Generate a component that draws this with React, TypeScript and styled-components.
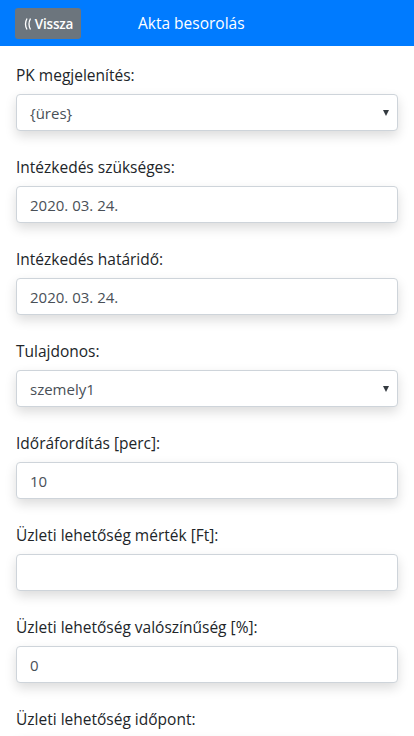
import React from "react";
import styled, { createGlobalStyle } from "styled-components";

const GlobalStyle = createGlobalStyle`
  body {
    margin: 0;
    background: #fff;
    font-family: "Open Sans", "Noto Sans", Arial, sans-serif;
    color: #212529;
  }
`;

interface Field {
  label: string;
  value: string;
  kind: "select" | "input";
}

const fields: Field[] = [
  { label: "PK megjelenítés:", value: "{üres}", kind: "select" },
  { label: "Intézkedés szükséges:", value: "2020. 03. 24.", kind: "input" },
  { label: "Intézkedés határidő:", value: "2020. 03. 24.", kind: "input" },
  { label: "Tulajdonos:", value: "szemely1", kind: "select" },
  { label: "Időráfordítás [perc]:", value: "10", kind: "input" },
  { label: "Üzleti lehetőség mérték [Ft]:", value: "", kind: "input" },
  { label: "Üzleti lehetőség valószínűség [%]:", value: "0", kind: "input" },
  { label: "Üzleti lehetőség időpont:", value: "", kind: "input" },
];

// thin double chevron in front of "Vissza"
const BackIcon = () => (
  <svg width="8" height="14" viewBox="0 0 8 14" fill="none">
    <path d="M4 1.5 Q1 7 4 12.5" stroke="#fff" strokeWidth="1.3" />
    <path d="M7.5 1.5 Q4.5 7 7.5 12.5" stroke="#fff" strokeWidth="1.3" />
  </svg>
);

function App() {
  return (
    <Page>
      <GlobalStyle />
      <TopBar>
        <BackButton>
          <BackIcon />
          Vissza
        </BackButton>
        <Title>Akta besorolás</Title>
      </TopBar>
      <Form>
        {fields.map((f) => (
          <Group key={f.label}>
            <Label>{f.label}</Label>
            <Box>
              <Value>{f.value}</Value>
              {f.kind === "select" && <Caret />}
            </Box>
          </Group>
        ))}
      </Form>
    </Page>
  );
}

const Page = styled.div`
  width: 414px;
  height: 736px;
  overflow: hidden;
`;

const TopBar = styled.div`
  height: 46px;
  background: #007bff;
  display: flex;
  align-items: center;
  padding: 0 15px;
  box-sizing: border-box;
`;

const BackButton = styled.div`
  height: 31px;
  width: 66px;
  box-sizing: border-box;
  background: #6c757d;
  border-radius: 3px;
  color: #fff;
  font-size: 13.5px;
  font-weight: 600;
  display: flex;
  align-items: center;
  justify-content: center;
  gap: 4px;
  letter-spacing: -0.2px;
  margin-top: 1px;
`;

const Title = styled.div`
  color: #fff;
  font-size: 15.5px;
  margin-left: 57px;
`;

const Form = styled.div`
  padding: 17px 16px 0;
  display: flex;
  flex-direction: column;
  gap: 24px;
`;

const Group = styled.div`
  display: flex;
  flex-direction: column;
  gap: 7px;
`;

const Label = styled.div`
  font-size: 15.5px;
  line-height: 24px;
  color: #212529;
`;

const Box = styled.div`
  height: 37px;
  box-sizing: border-box;
  border: 1px solid #ced4da;
  border-radius: 4px;
  background: #fff;
  box-shadow: 0 5px 12px rgba(0, 0, 0, 0.14);
  display: flex;
  align-items: center;
  padding: 0 8px 0 13px;
`;

const Value = styled.span`
  flex: 1;
  font-size: 15px;
  color: #495057;
`;

const Caret = styled.span`
  width: 0;
  height: 0;
  border-left: 3.5px solid transparent;
  border-right: 3.5px solid transparent;
  border-top: 6px solid #343a40;
`;

export default App;
